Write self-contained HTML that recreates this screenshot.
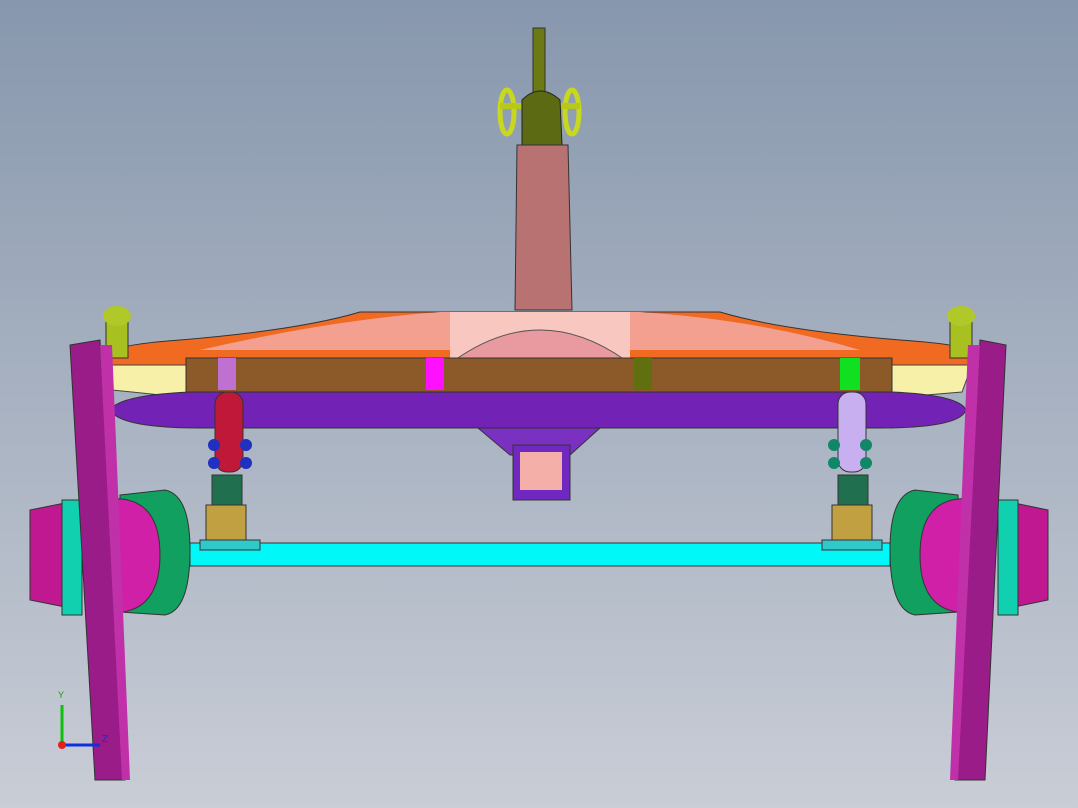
<!DOCTYPE html>
<html><head><meta charset="utf-8"><style>
html,body{margin:0;padding:0;width:1078px;height:808px;overflow:hidden}
body{background:linear-gradient(#8797ad,#c9cdd6)}
svg{display:block}
</style></head><body>
<svg width="1078" height="808" viewBox="0 0 1078 808">
<!-- drawbar stick -->
<rect x="533" y="28" width="12" height="70" fill="#6b7a12" stroke="#333" stroke-width="1"/>
<!-- yellow rings -->
<ellipse cx="507" cy="112" rx="7" ry="22" fill="none" stroke="#c8d820" stroke-width="5"/>
<ellipse cx="572" cy="112" rx="7" ry="22" fill="none" stroke="#c8d820" stroke-width="5"/>
<rect x="500" y="103" width="22" height="6" fill="#b8c818"/>
<rect x="558" y="103" width="22" height="6" fill="#b8c818"/>
<!-- olive head -->
<path d="M522 100 Q540 82 560 100 L562 145 L522 145 Z" fill="#5c6a14" stroke="#222" stroke-width="1"/>
<!-- beam -->
<path d="M517 145 L568 145 L572 310 L515 310 Z" fill="#b87272" stroke="#333" stroke-width="1"/>
<!-- orange wing -->
<path d="M108 355 Q110 345 180 340 Q300 330 360 312 L720 312 Q780 330 900 340 Q975 345 975 355 L975 368 L108 368 Z" fill="#f06a22" stroke="#333" stroke-width="1"/>
<path d="M200 350 Q330 320 440 312 L640 312 Q760 320 860 350 Z" fill="#f4a090"/>
<path d="M450 312 L630 312 L630 360 L450 360 Z" fill="#f8c8c0"/>
<path d="M455 360 Q540 300 625 360" fill="#e89aa0" stroke="#555" stroke-width="1"/>
<!-- yellow side pieces -->
<path d="M108 365 L190 365 L190 398 L112 390 Z" fill="#f6f0a8" stroke="#444"/>
<path d="M890 365 L972 365 L962 392 L890 398 Z" fill="#f6f0a8" stroke="#444"/>
<!-- brown bar -->
<rect x="186" y="358" width="706" height="34" fill="#8c5a28" stroke="#333"/>
<rect x="218" y="358" width="18" height="32" fill="#c070d0"/>
<rect x="426" y="358" width="18" height="32" fill="#ff10ff"/>
<rect x="634" y="358" width="18" height="32" fill="#607010"/>
<rect x="840" y="358" width="20" height="32" fill="#10e020"/>
<!-- purple bar -->
<path d="M110 410 Q120 395 190 392 L892 392 Q960 395 966 410 Q960 428 880 428 L200 428 Q120 428 110 410 Z" fill="#7222b4" stroke="#333"/>
<!-- center hanger -->
<path d="M478 428 L600 428 L570 455 L510 455 Z" fill="#7a30c0" stroke="#333"/>
<rect x="513" y="445" width="57" height="55" fill="#7028c0" stroke="#333"/>
<rect x="520" y="452" width="42" height="38" fill="#f4b0a8"/>
<!-- hangers -->
<rect x="215" y="392" width="28" height="80" rx="12" fill="#c01838" stroke="#333"/>
<rect x="838" y="392" width="28" height="80" rx="12" fill="#c8b0f0" stroke="#333"/>
<circle cx="214" cy="445" r="6" fill="#2030c0"/><circle cx="214" cy="463" r="6" fill="#2030c0"/>
<circle cx="246" cy="445" r="6" fill="#2030c0"/><circle cx="246" cy="463" r="6" fill="#2030c0"/>
<circle cx="834" cy="445" r="6" fill="#108868"/><circle cx="834" cy="463" r="6" fill="#108868"/>
<circle cx="866" cy="445" r="6" fill="#108868"/><circle cx="866" cy="463" r="6" fill="#108868"/>
<rect x="212" y="475" width="30" height="40" fill="#207050" stroke="#333"/>
<rect x="838" y="475" width="30" height="40" fill="#207050" stroke="#333"/>
<rect x="206" y="505" width="40" height="40" fill="#c0a040" stroke="#333"/>
<rect x="832" y="505" width="40" height="40" fill="#c0a040" stroke="#333"/>
<!-- axle -->
<rect x="190" y="543" width="700" height="23" fill="#00f8f8" stroke="#333"/>
<rect x="200" y="540" width="60" height="10" fill="#30c8c8" stroke="#333"/>
<rect x="822" y="540" width="60" height="10" fill="#30c8c8" stroke="#333"/>
<!-- top knobs -->
<rect x="106" y="318" width="22" height="40" fill="#a8c020" stroke="#333"/>
<ellipse cx="117" cy="316" rx="14" ry="10" fill="#b0c828"/>
<rect x="950" y="318" width="22" height="40" fill="#a8c020" stroke="#333"/>
<ellipse cx="961" cy="316" rx="14" ry="10" fill="#b0c828"/>
<!-- left wheel -->
<path d="M30 510 L80 500 L80 610 L30 600 Z" fill="#c01890" stroke="#333"/>
<rect x="62" y="500" width="20" height="115" fill="#10d0b0" stroke="#333"/>
<path d="M120 495 L165 490 Q190 495 190 550 Q190 610 165 615 L120 612 Z" fill="#12a060" stroke="#333"/>
<path d="M100 500 Q160 490 160 555 Q160 620 100 612 Z" fill="#d020a8" stroke="#333"/>
<path d="M70 345 L100 340 L125 780 L95 780 Z" fill="#9a1c88" stroke="#333"/>
<path d="M100 345 L112 345 L130 780 L122 780 Z" fill="#c030a8"/>
<!-- right wheel -->
<path d="M1048 510 L1000 500 L1000 610 L1048 600 Z" fill="#c01890" stroke="#333"/>
<rect x="998" y="500" width="20" height="115" fill="#10d0b0" stroke="#333"/>
<path d="M958 495 L915 490 Q890 495 890 550 Q890 610 915 615 L958 612 Z" fill="#12a060" stroke="#333"/>
<path d="M980 500 Q920 490 920 555 Q920 620 980 612 Z" fill="#d020a8" stroke="#333"/>
<path d="M1006 345 L980 340 L955 780 L985 780 Z" fill="#9a1c88" stroke="#333"/>
<path d="M980 345 L968 345 L950 780 L958 780 Z" fill="#c030a8"/>
<!-- axis triad -->
<line x1="62" y1="745" x2="62" y2="705" stroke="#10c010" stroke-width="3"/>
<line x1="62" y1="745" x2="100" y2="745" stroke="#1030e0" stroke-width="3"/>
<circle cx="62" cy="745" r="4" fill="#e02020"/>
<text x="58" y="698" font-family="Liberation Sans,sans-serif" font-size="9" fill="#10a010">Y</text>
<text x="102" y="742" font-family="Liberation Sans,sans-serif" font-size="10" fill="#1030e0">Z</text>
</svg>
</body></html>
